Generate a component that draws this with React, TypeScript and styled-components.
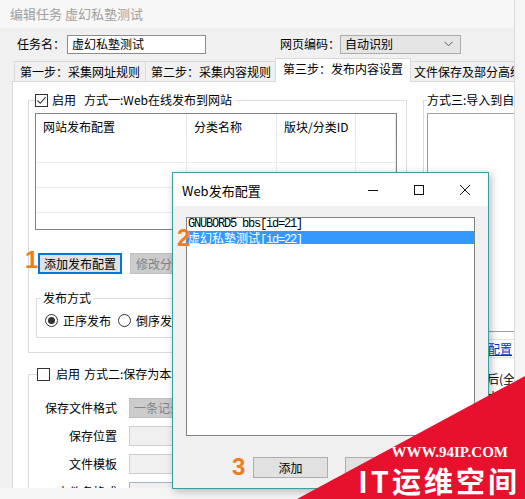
import React from "react";
import styled, { createGlobalStyle } from "styled-components";

const uiFont = `"Noto Sans CJK SC", "Noto Sans", sans-serif`;
const monoFont = `"Liberation Mono", "DejaVu Sans Mono", monospace`;

const GlobalStyle = createGlobalStyle`
  html, body { margin: 0; padding: 0; }
  body {
    background: #f5f5f5;
    font-family: ${uiFont};
    font-size: 12px;
    line-height: 14px;
    color: #000;
  }
  * { box-sizing: border-box; }
`;

const Screen = styled.div`
  position: relative;
  width: 525px;
  height: 499px;
  overflow: hidden;
  background: #f5f5f5;
`;

const Window = styled.div`
  width: 515px;
  height: 488px;
  background: #f0f0f0;
  border-right: 1px solid #dadada;
  display: flex;
  flex-direction: column;
  overflow: hidden;
`;

const TitleBar = styled.div`
  height: 28px;
  flex-shrink: 0;
  display: flex;
  align-items: center;
  padding-left: 10px;
  font-size: 13px;
  color: #a0a0a0;
  background: #f7f7f7;
`;

const TaskRow = styled.div`
  height: 30px;
  flex-shrink: 0;
  display: flex;
  align-items: center;
  padding: 2px 0 0 17px;
`;

const TextBox = styled.div`
  width: 139px;
  height: 19px;
  margin-left: 2px;
  padding-left: 4px;
  background: #fff;
  border: 1px solid #8c8c8c;
  display: flex;
  align-items: center;
`;

const ComboLabel = styled.span`
  margin-left: 74px;
`;

const Combo = styled.div<{ $w: number; $disabled?: boolean }>`
  width: ${(p) => p.$w}px;
  height: 19px;
  padding: 0 7px 0 4px;
  background: ${(p) => (p.$disabled ? "#cccccc" : "#e5e5e5")};
  border: 1px solid ${(p) => (p.$disabled ? "#bfbfbf" : "#acacac")};
  color: ${(p) => (p.$disabled ? "#838383" : "#000")};
  display: flex;
  align-items: center;
  justify-content: space-between;
  white-space: nowrap;
  overflow: hidden;
`;

const TabStrip = styled.div`
  height: 24px;
  flex-shrink: 0;
  margin-bottom: -1px;
  padding-left: 14px;
  display: flex;
  align-items: flex-end;
  position: relative;
  z-index: 1;
`;

const Tab = styled.div<{ $active?: boolean }>`
  flex-shrink: 0;
  height: ${(p) => (p.$active ? 24 : 20)}px;
  margin: ${(p) => (p.$active ? "0 -2px 0 -2px" : "0 0 1px -1px")};
  padding: ${(p) => (p.$active ? "0 7px" : "0 5px")};
  border: 1px solid #d9d9d9;
  border-bottom: none;
  background: ${(p) => (p.$active ? "#fff" : "#f0f0f0")};
  position: relative;
  z-index: ${(p) => (p.$active ? 2 : 1)};
  display: flex;
  align-items: center;
  justify-content: center;
  padding-bottom: ${(p) => (p.$active ? 3 : 0)}px;
  white-space: nowrap;
  &:first-child {
    margin-left: 0;
  }
`;

const Panel = styled.div`
  flex: 1;
  width: 560px;
  margin-left: 12px;
  background: #fff;
  border: 1px solid #d9d9d9;
  padding: 11px 0 0 15px;
  display: flex;
  align-items: flex-start;
  gap: 16px;
`;

const Column = styled.div`
  display: flex;
  flex-direction: column;
  flex-shrink: 0;
`;

const Group = styled.fieldset<{ $w: number; $pl: number }>`
  width: ${(p) => p.$w}px;
  flex-shrink: 0;
  margin: 0;
  min-width: 0;
  border: 1px solid #dcdcdc;
  padding: 6px 9px 14px ${(p) => p.$pl}px;
`;

const Legend = styled.legend<{ $pr?: number }>`
  padding: 0 ${(p) => p.$pr ?? 3}px 0 0;
  height: 14px;
  line-height: 14px;
  white-space: nowrap;
`;

const LegendInner = styled.span<{ $gap: number }>`
  display: flex;
  align-items: center;
  gap: 4px;
  & > span:nth-child(3) {
    margin-left: ${(p) => p.$gap}px;
  }
`;

const CheckBox = styled.span`
  width: 13px;
  height: 13px;
  border: 1px solid #333;
  background: #fff;
  display: inline-flex;
  align-items: center;
  justify-content: center;
  flex-shrink: 0;
`;

const ListView = styled.div`
  height: 117px;
  border: 1px solid #828282;
  background: #fff;
  display: grid;
  grid-template-columns: 151px 90px 79px 1fr;
  grid-template-rows: 24px;
  grid-auto-rows: 25px;
  overflow: hidden;
`;

const HeadCell = styled.div`
  padding-left: 7px;
  padding-top: 6px;
  border-right: 1px solid #e5e5e5;
  white-space: nowrap;
`;

const GridCell = styled.div`
  border-right: 1px solid #ececec;
  border-bottom: 1px solid #ececec;
`;

const ButtonRow = styled.div`
  display: flex;
  gap: 8px;
  margin: 23px 0 0 3px;
`;

const Button = styled.div<{ $focus?: boolean; $disabled?: boolean; $w: number }>`
  width: ${(p) => p.$w}px;
  height: 21px;
  flex-shrink: 0;
  display: flex;
  align-items: center;
  justify-content: center;
  white-space: nowrap;
  background: ${(p) => (p.$disabled ? "#cccccc" : "#e1e1e1")};
  color: ${(p) => (p.$disabled ? "#838383" : "#000")};
  border: 1px solid
    ${(p) => (p.$focus ? "#0078d7" : p.$disabled ? "#bfbfbf" : "#adadad")};
  box-shadow: ${(p) => (p.$focus ? "inset 0 0 0 1px #0078d7" : "none")};
`;

const SubGroup = styled.fieldset`
  margin: 17px 3px 0 1px;
  min-width: 0;
  border: 1px solid #dcdcdc;
  padding: 9px 4px 10px 4px;
`;

const SubLegend = styled.legend`
  padding: 0 2px;
  height: 14px;
  line-height: 14px;
`;

const RadioRow = styled.div`
  display: flex;
  align-items: center;
  height: 13px;
  padding-left: 4px;
  white-space: nowrap;
`;

const RadioItem = styled.label`
  display: flex;
  align-items: center;
  gap: 5px;
  margin-right: 7px;
`;

const Radio = styled.span<{ $on?: boolean }>`
  width: 13px;
  height: 13px;
  border-radius: 50%;
  border: 1px solid #333;
  background: #fff;
  display: inline-flex;
  align-items: center;
  justify-content: center;
  &::after {
    content: "";
    width: 7px;
    height: 7px;
    border-radius: 50%;
    background: ${(p) => (p.$on ? "#333" : "transparent")};
  }
`;

const FormGrid = styled.div`
  margin-top: 11px;
  display: grid;
  grid-template-columns: 80px 200px;
  grid-auto-rows: 20px;
  column-gap: 12px;
  row-gap: 8px;
  align-items: center;
`;

const FieldLabel = styled.span`
  text-align: right;
  white-space: nowrap;
`;

const Field = styled.div<{ $border?: string }>`
  height: 20px;
  background: #f0f0f0;
  border: 1px solid ${(p) => p.$border ?? "#cfcfcf"};
`;

const ImportBox = styled.div`
  height: 219px;
  border: 1px solid #a0a0a0;
  background: #fff;
`;

const LinkRow = styled.div`
  margin-top: 7px;
  height: 19px;
  border-top: 1px solid #e3e3e3;
  border-bottom: 1px solid #e3e3e3;
  display: flex;
  align-items: center;
  white-space: nowrap;
  color: #0033cc;
  text-decoration: underline;
`;

const NoteRow = styled.div`
  margin-top: 14px;
  white-space: nowrap;
`;

/* dialog laid over the main window */
const Dialog = styled.div`
  position: absolute;
  left: 172px;
  top: 172px;
  width: 317px;
  height: 317px;
  border: 1px solid #3a9fa3;
  box-shadow: 2px 2px 8px rgba(0, 0, 0, 0.28);
  display: flex;
  flex-direction: column;
  background: #f0f0f0;
  z-index: 5;
`;

const DialogTitle = styled.div`
  height: 33px;
  flex-shrink: 0;
  background: #fff;
  display: flex;
  align-items: center;
  padding-left: 9px;
  font-size: 13px;
`;

const TitleText = styled.span`
  flex: 1;
  padding-top: 2px;
`;

const CaptionButton = styled.div`
  width: 46px;
  height: 33px;
  display: flex;
  align-items: center;
  justify-content: center;
`;

const DialogBody = styled.div`
  flex: 1;
  padding: 11px 13px 0 13px;
  display: flex;
  flex-direction: column;
`;

const ListBox = styled.div`
  height: 219px;
  border: 1px solid #828282;
  background: #fff;
`;

const ListItem = styled.div<{ $selected?: boolean }>`
  height: 13px;
  line-height: 13px;
  padding-left: 1px;
  font-family: ${monoFont};
  font-size: 12px;
  letter-spacing: -1.2px;
  white-space: nowrap;
  background: ${(p) => (p.$selected ? "#3399ff" : "transparent")};
  color: ${(p) => (p.$selected ? "#fff" : "#000")};
`;

const Cjk = styled.span`
  font-family: ${uiFont};
  font-size: 12px;
  letter-spacing: 0;
`;

const DialogButtons = styled.div`
  display: flex;
  gap: 17px;
  margin-top: 21px;
  padding-left: 67px;
`;

const StepNum = styled.span<{ $x: number; $y: number }>`
  position: absolute;
  left: ${(p) => p.$x}px;
  top: ${(p) => p.$y}px;
  font-family: "Liberation Sans", Arial, sans-serif;
  font-weight: 700;
  font-size: 24px;
  line-height: 24px;
  color: #f07d1d;
  z-index: 8;
`;

const Watermark = styled.div`
  position: absolute;
  inset: 0;
  z-index: 10;
  background: #e8112d;
  clip-path: polygon(297px 499px, 525px 376px, 525px 499px);
  display: flex;
  flex-direction: column;
  justify-content: flex-end;
  align-items: flex-end;
  color: #fff;
  padding: 0 5px 3px 0;
`;

const SiteUrl = styled.div`
  font-family: "Liberation Serif", serif;
  font-weight: 700;
  font-size: 15px;
  line-height: 16px;
  margin: 0 12px 4px 0;
`;

const SiteName = styled.div`
  font-family: ${uiFont};
  font-weight: 700;
  font-size: 29px;
  line-height: 32px;
  letter-spacing: 3px;
`;

const Chevron = () => (
  <svg width="9" height="6" viewBox="0 0 9 6">
    <path d="M0.5 0.8 L4.5 4.8 L8.5 0.8" fill="none" stroke="#555" strokeWidth="1" />
  </svg>
);

const Check = () => (
  <svg width="11" height="11" viewBox="0 0 11 11">
    <path d="M1.5 5.5 L4.2 8.3 L9.6 2.2" fill="none" stroke="#333" strokeWidth="1.1" />
  </svg>
);

const App: React.FC = () => {
  return (
    <Screen>
      <GlobalStyle />
      <Window>
        <TitleBar>编辑任务 虚幻私塾测试</TitleBar>
        <TaskRow>
          <span>任务名：</span>
          <TextBox>虚幻私塾测试</TextBox>
          <ComboLabel>网页编码：</ComboLabel>
          <Combo $w={121}>
            <span>自动识别</span>
            <Chevron />
          </Combo>
        </TaskRow>
        <TabStrip>
          <Tab>第一步：采集网址规则</Tab>
          <Tab>第二步：采集内容规则</Tab>
          <Tab $active>第三步：发布内容设置</Tab>
          <Tab>文件保存及部分高级设置</Tab>
        </TabStrip>
        <Panel>
          <Column>
            <Group $w={379} $pl={6}>
              <Legend>
                <LegendInner $gap={4}>
                  <CheckBox>
                    <Check />
                  </CheckBox>
                  <span>启用</span>
                  <span>方式一:Web在线发布到网站</span>
                </LegendInner>
              </Legend>
              <ListView>
                <HeadCell>网站发布配置</HeadCell>
                <HeadCell>分类名称</HeadCell>
                <HeadCell>版块/分类ID</HeadCell>
                <HeadCell />
                {Array.from({ length: 16 }).map((_, i) => (
                  <GridCell key={i} />
                ))}
              </ListView>
              <ButtonRow>
                <Button $w={84} $focus>
                  添加发布配置
                </Button>
                <Button $w={84} $disabled>
                  修改分类配置
                </Button>
              </ButtonRow>
              <SubGroup>
                <SubLegend>发布方式</SubLegend>
                <RadioRow>
                  <RadioItem>
                    <Radio $on />
                    正序发布
                  </RadioItem>
                  <RadioItem>
                    <Radio />
                    倒序发布
                  </RadioItem>
                </RadioRow>
              </SubGroup>
            </Group>
            <Group $w={379} $pl={8} style={{ marginTop: 14 }}>
              <Legend>
                <LegendInner $gap={0}>
                  <CheckBox style={{ marginRight: 2 }} />
                  <span>启用</span>
                  <span>方式二:保存为本地文件</span>
                </LegendInner>
              </Legend>
              <FormGrid>
                <FieldLabel>保存文件格式</FieldLabel>
                <Combo $w={200} $disabled style={{ height: 20 }}>
                  <span>一条记录一个文件</span>
                </Combo>
                <FieldLabel>保存位置</FieldLabel>
                <Field />
                <FieldLabel>文件模板</FieldLabel>
                <Field />
                <FieldLabel>文件名格式</FieldLabel>
                <Field $border="#9fb6cd" />
              </FormGrid>
            </Group>
          </Column>
          <Group $w={200} $pl={3}>
            <Legend $pr={2}>
              <span>方式三:导入到自己的数据库</span>
            </Legend>
            <ImportBox />
            <LinkRow>
              <span style={{ paddingLeft: 1 }}>自定义导入配置</span>
            </LinkRow>
            <NoteRow>数据已导入后(全部删除)</NoteRow>
            <NoteRow style={{ marginTop: 4 }}>数据存储到本地</NoteRow>
          </Group>
        </Panel>
      </Window>

      <Dialog>
        <DialogTitle>
          <TitleText>Web发布配置</TitleText>
          <CaptionButton>
            <svg width="10" height="10" viewBox="0 0 10 10">
              <path d="M0 5.5 H10" stroke="#111" strokeWidth="1" />
            </svg>
          </CaptionButton>
          <CaptionButton>
            <svg width="10" height="10" viewBox="0 0 10 10">
              <rect x="0.5" y="0.5" width="9" height="9" fill="none" stroke="#111" strokeWidth="1" />
            </svg>
          </CaptionButton>
          <CaptionButton>
            <svg width="10" height="10" viewBox="0 0 10 10">
              <path d="M0 0 L10 10 M10 0 L0 10" stroke="#111" strokeWidth="1" />
            </svg>
          </CaptionButton>
        </DialogTitle>
        <DialogBody>
          <ListBox>
            <ListItem>GNUBORD5 bbs[id=21]</ListItem>
            <ListItem $selected>
              <Cjk>虚幻私塾测试</Cjk>[id=22]
            </ListItem>
          </ListBox>
          <DialogButtons>
            <Button $w={75}>添加</Button>
            <Button $w={75}>取消</Button>
          </DialogButtons>
        </DialogBody>
      </Dialog>

      <StepNum $x={25} $y={248}>1</StepNum>
      <StepNum $x={177} $y={226}>2</StepNum>
      <StepNum $x={232} $y={455}>3</StepNum>

      <Watermark>
        <SiteUrl>WWW.94IP.COM</SiteUrl>
        <SiteName>IT运维空间</SiteName>
      </Watermark>
    </Screen>
  );
};

export default App;
